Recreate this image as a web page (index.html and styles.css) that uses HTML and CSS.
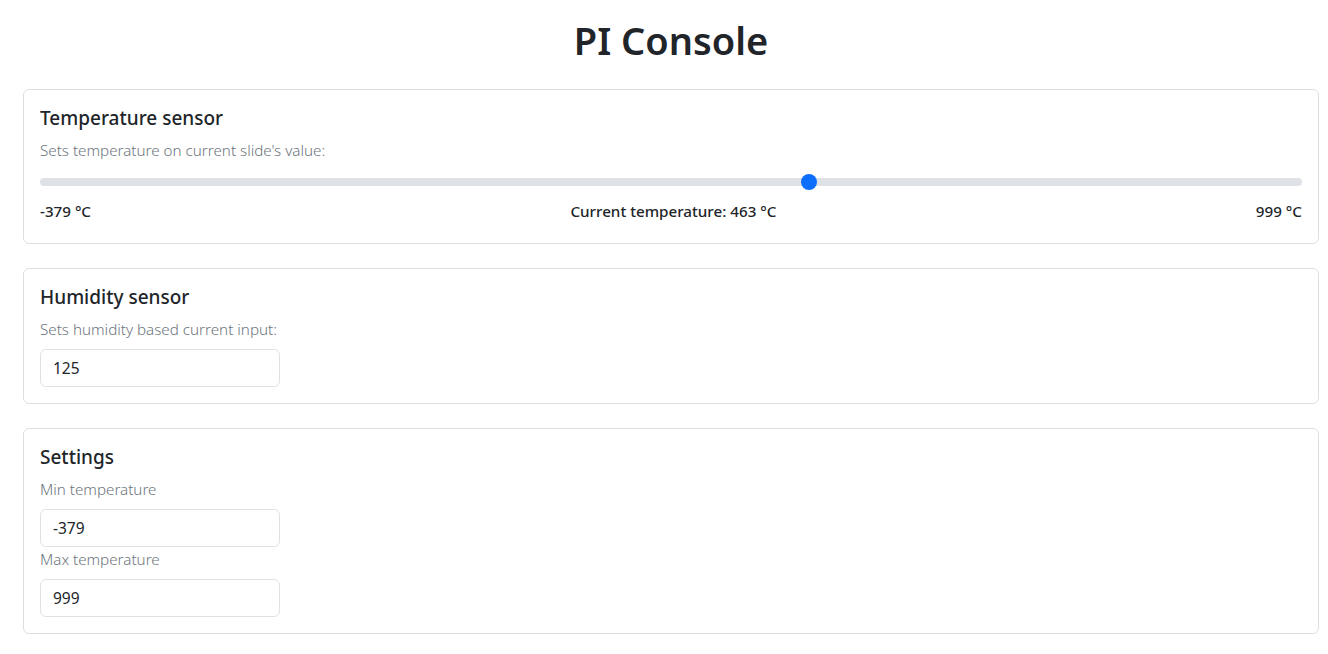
FILE: index.html
```html
<!DOCTYPE html>
<html lang="en">
<head>
<meta charset="utf-8">
<title>PI Console</title>
<link rel="stylesheet" href="styles.css">
</head>
<body>
<main class="page">
  <h1 class="page-title">PI Console</h1>

  <section class="card">
    <h5 class="card-title">Temperature sensor</h5>
    <p class="card-text">Sets temperature on current slide's value:</p>
    <input class="range" type="range" min="-379" max="999" value="463">
    <div class="range-labels">
      <span>-379 °C</span>
      <span>Current temperature: 463 °C</span>
      <span>999 °C</span>
    </div>
  </section>

  <section class="card">
    <h5 class="card-title">Humidity sensor</h5>
    <p class="card-text">Sets humidity based current input:</p>
    <input class="field" type="text" value="125">
  </section>

  <section class="card">
    <h5 class="card-title">Settings</h5>
    <label class="field-label">Min temperature</label>
    <input class="field" type="text" value="-379">
    <label class="field-label">Max temperature</label>
    <input class="field" type="text" value="999">
  </section>
</main>
</body>
</html>
```

FILE: styles.css
```css
* { box-sizing: border-box; }

html, body {
  margin: 0;
  padding: 0;
  background: #fff;
}

body {
  font-family: "Noto Sans", "Open Sans", sans-serif;
  color: #212529;
  font-size: 16px;
  line-height: 1.5;
}

.page {
  display: flex;
  flex-direction: column;
  gap: 24px;
  padding: 16px 9px 20px 23px;
}

.page-title {
  margin: 0 0 1px;
  font-size: 38px;
  font-weight: 600;
  line-height: 48px;
  text-align: center;
}

.card {
  display: flex;
  flex-direction: column;
  align-items: flex-start;
  border: 1px solid #dcdfe2;
  border-radius: 6px;
  padding: 16px;
}

.card-title {
  margin: 0 0 8px;
  padding-top: 1px;
  font-size: 19px;
  font-weight: 500;
  line-height: 23px;
}

.card-text,
.field-label {
  margin: 0 0 8px;
  font-size: 15.2px;
  font-weight: 300;
  color: #6c757d;
  line-height: 24px;
}

.field {
  width: 240px;
  height: 38px;
  padding: 6px 12px;
  border: 1px solid #dee2e6;
  border-radius: 6px;
  font: inherit;
  font-size: 15.5px;
  color: #212529;
  background: #fff;
}

.range {
  -webkit-appearance: none;
  appearance: none;
  width: 100%;
  height: 24px;
  margin: 0;
  padding: 0;
  background: transparent;
}

.range::-webkit-slider-runnable-track {
  height: 8px;
  border-radius: 4px;
  background: #dee2e6;
}

.range::-webkit-slider-thumb {
  -webkit-appearance: none;
  appearance: none;
  width: 16px;
  height: 16px;
  margin-top: -4px;
  border: 0;
  border-radius: 50%;
  background: #0d6efd;
}

.range-labels {
  display: flex;
  justify-content: space-between;
  width: 100%;
  margin: 5px 0 4px;
  font-size: 15.2px;
  font-weight: 500;
  line-height: 24px;
}
```
